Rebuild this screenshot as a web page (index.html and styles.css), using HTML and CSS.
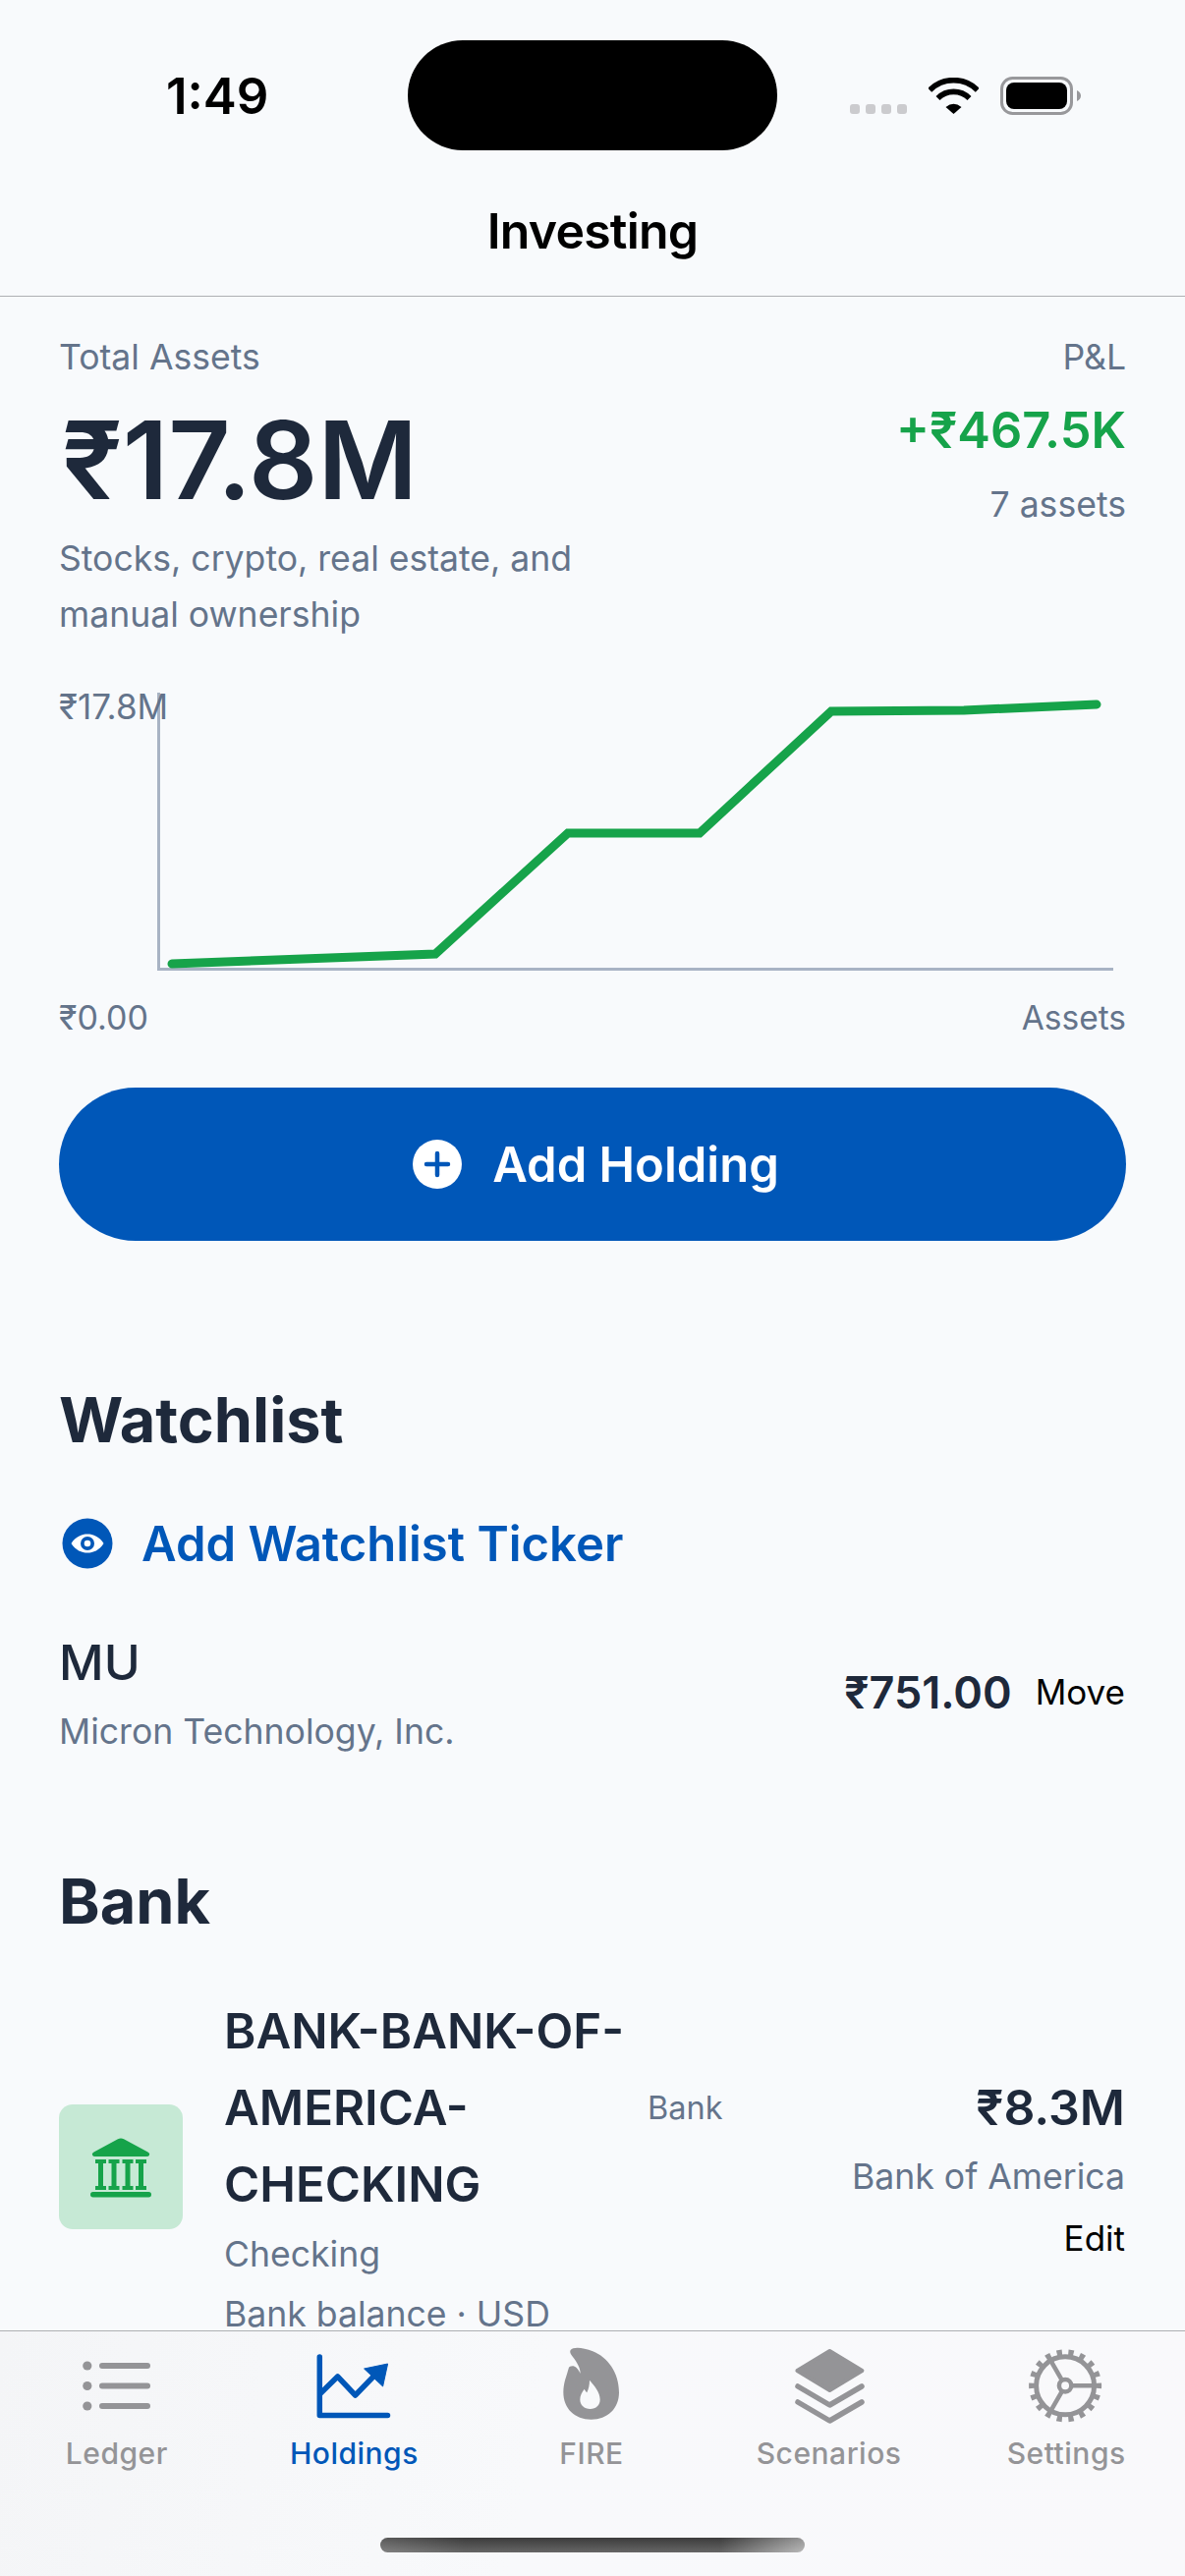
FILE: index.html
```html
<!DOCTYPE html>
<html lang="en">

<head>
    <meta charset="UTF-8">
    <meta name="viewport" content="width=device-width, initial-scale=1.0">
    <title>Investing</title>
    <link rel="stylesheet" href="styles.css">
</head>

<body>
    <div class="app">
        <div class="status-bar">
            <div class="status-time">1:49</div>
            <div class="island"></div>
            <div class="status-icons">
                <div class="signal">
                    <span></span><span></span><span></span><span></span>
                </div>
                <svg class="wifi" width="51" height="37" viewBox="0 0 51 37">
                    <path d="M1.2 12.7A34.3 34.3 0 0 1 49.8 12.7" fill="none" stroke="#000" stroke-width="5.6" />
                    <path d="M9.5 21A22.6 22.6 0 0 1 41.5 21" fill="none" stroke="#000" stroke-width="5.6" />
                    <path d="M25.5 37L17.5 30Q25.5 23.5 33.5 30Z" fill="#000" />
                </svg>
                <svg class="battery" width="82" height="39" viewBox="0 0 82 39">
                    <rect x="1.5" y="1.5" width="71" height="36" rx="11" fill="none" stroke="#98989b" stroke-width="3" />
                    <rect x="6" y="6" width="62" height="27" rx="8" fill="#000" />
                    <path d="M78 14C80.5 15 82 17 82 19.5C82 22 80.5 24 78 25Z" fill="#98989b" />
                </svg>
            </div>
        </div>
        <header class="nav-bar">Investing</header>

        <main class="content">
            <section class="summary">
                <div>
                    <div class="muted summary-label">Total Assets</div>
                    <div class="total">₹17.8M</div>
                    <p class="muted summary-note">Stocks, crypto, real estate, and manual ownership</p>
                </div>
                <div class="summary-right">
                    <div class="muted summary-label">P&amp;L</div>
                    <div class="pnl">+₹467.5K</div>
                    <div class="muted asset-count">7 assets</div>
                </div>
            </section>

            <div class="chart">
                <span class="chart-top muted">₹17.8M</span>
                <svg width="1086" height="300" viewBox="0 0 1086 300">
                    <path d="M101.5 8V289.5H1073" fill="none" stroke="#a8b3c4" stroke-width="3" />
                    <polyline points="115,284 248,279 383,274 518,151 652,151 786,27 921,26 1056,20" fill="none" stroke="#16a34a" stroke-width="9" stroke-linecap="round" />
                </svg>
            </div>
            <div class="chart-foot muted">
                <span>₹0.00</span>
                <span class="chart-x">Assets</span>
            </div>

            <button class="add-holding" type="button">
                <svg width="50" height="50" viewBox="0 0 50 50">
                    <circle cx="25" cy="25" r="25" fill="#fff" />
                    <path d="M25 14V36M14 25H36" stroke="#0057b8" stroke-width="4.5" stroke-linecap="round" />
                </svg>
                Add Holding
            </button>

            <h2 class="section-title watchlist-title">Watchlist</h2>
            <div class="add-ticker">
                <svg width="52" height="52" viewBox="0 0 52 52">
                    <circle cx="26" cy="26" r="25.5" fill="#0057b8" />
                    <path d="M9.5 26C14 19 20 16.5 26 16.5C32 16.5 38 19 42.5 26C38 33 32 35.5 26 35.5C20 35.5 14 33 9.5 26Z" fill="#fff" />
                    <circle cx="26" cy="26" r="7" fill="#0057b8" />
                    <circle cx="26" cy="26" r="3.3" fill="#fff" />
                </svg>
                Add Watchlist Ticker
            </div>
            <div class="watch-row">
                <div>
                    <div class="ticker">MU</div>
                    <div class="muted company">Micron Technology, Inc.</div>
                </div>
                <div class="watch-right">
                    <span class="price">₹751.00</span>
                    <span class="link-text">Move</span>
                </div>
            </div>

            <h2 class="section-title bank-title">Bank</h2>
            <div class="bank-row">
                <div class="bank-icon">
                    <svg width="62" height="62" viewBox="0 0 62 62">
                        <path d="M28 2.2Q31 .6 34 2.2L58.5 15.5Q61 17 60 18.5Q59.5 20 57 20H5Q2.5 20 2 18.5Q1 17 3.5 15.5Z" fill="#16a34a" />
                        <path d="M5 23H16V27H13V50H16V54H5V50H8V27H5ZM18.5 23H29.500V27H26.500V50H29.500V54H18.5V50H21.5V27H18.5ZM32.5 23H43.5V27H40.5V50H43.5V54H32.5V50H35.5V27H32.5ZM46 23H57V27H54V50H57V54H46V50H49V27H46Z" fill="#16a34a" />
                        <rect x="0" y="56" width="62" height="5.5" rx="2.7" fill="#16a34a" />
                    </svg>
                </div>
                <div class="bank-info">
                    <div class="bank-name">BANK-BANK-OF-AMERICA-CHECKING</div>
                    <div class="muted bank-line">Checking</div>
                    <div class="muted bank-line">Bank balance · USD</div>
                </div>
                <div class="bank-side">
                    <span class="muted bank-tag">Bank</span>
                    <div class="bank-values">
                        <div class="bank-amount">₹8.3M</div>
                        <div class="muted bank-inst">Bank of America</div>
                        <div class="link-text bank-edit">Edit</div>
                    </div>
                </div>
            </div>
        </main>

        <nav class="tab-bar">
            <div class="tabs">
                <div class="tab">
                    <svg width="90" height="85" viewBox="0 0 90 85">
                        <g fill="#949497">
                            <circle cx="14.8" cy="23" r="4.6" />
                            <circle cx="14.8" cy="43.5" r="4.6" />
                            <circle cx="14.8" cy="64" r="4.6" />
                            <rect x="27" y="20" width="52" height="6" rx="3" />
                            <rect x="27" y="40.5" width="52" height="6" rx="3" />
                            <rect x="27" y="61" width="52" height="6" rx="3" />
                        </g>
                    </svg>
                    <span>Ledger</span>
                </div>
                <div class="tab active">
                    <svg width="90" height="85" viewBox="0 0 90 85">
                        <path d="M10.3 14V73.5H79.5" fill="none" stroke="#0057b8" stroke-width="5.5" stroke-linecap="round" stroke-linejoin="round" />
                        <path d="M10.3 52L28.6 34L46.6 53L66 33" fill="none" stroke="#0057b8" stroke-width="5.5" stroke-linejoin="round" />
                        <path d="M79.6 21L55.6 26L74.6 44Z" fill="#0057b8" stroke="#0057b8" stroke-width="1" stroke-linejoin="round" />
                    </svg>
                    <span>Holdings</span>
                </div>
                <div class="tab">
                    <svg width="90" height="85" viewBox="-9 15 270 255">
                        <path fill="#949497" fill-rule="evenodd" d="M62 36C70 26 100 28 130 40C175 58 210 105 210 165C210 215 175 248 125 248C75 248 40 215 40 165C40 135 50 115 56 92C58 84 72 82 80 90C86 96 89 102 92 108C92 85 75 65 64 50C60 44 60 40 62 36ZM120 128C135 145 152 165 152 187C152 205 140 216 122 216C104 216 91 205 91 187C91 175 97 165 104 155C107 160 109 163 112 166C117 155 120 142 120 128Z" />
                    </svg>
                    <span>FIRE</span>
                </div>
                <div class="tab">
                    <svg width="90" height="85" viewBox="0 0 90 85">
                        <path d="M45.4 8L78.4 28L45.4 48L12.4 28Z" fill="#949497" stroke="#949497" stroke-width="4" stroke-linejoin="round" />
                        <path d="M13 44L45.4 63L78 44M13 60L45.4 79L78 60" fill="none" stroke="#949497" stroke-width="5.5" stroke-linecap="round" stroke-linejoin="round" />
                    </svg>
                    <span>Scenarios</span>
                </div>
                <div class="tab">
                    <svg width="90" height="85" viewBox="0 0 90 85">
                        <g fill="none" stroke="#949497">
                            <circle cx="44.1" cy="43.3" r="33" stroke-width="8" pathLength="360" stroke-dasharray="9 11" stroke-dashoffset="4.5" />
                            <circle cx="44.1" cy="43.3" r="29.5" stroke-width="5" />
                            <circle cx="44.1" cy="43.3" r="6.2" stroke-width="4.5" />
                            <path d="M50.5 43.3H73M40.9 37.8L29.4 17.8M40.9 48.8L29.4 68.8" stroke-width="4.5" />
                        </g>
                    </svg>
                    <span>Settings</span>
                </div>
            </div>
            <div class="home-indicator"></div>
        </nav>
    </div>
</body>

</html>
```

FILE: styles.css
```css
* {
    box-sizing: border-box;
}

body {
    font-family: Inter, 'Noto Sans', sans-serif;
    background: #f8fafc;
    margin: 0;
    padding: 0;
    color: #1e293b;
}

.app {
    width: 1206px;
    height: 2622px;
    display: flex;
    flex-direction: column;
    overflow: hidden;
}

.muted {
    color: #64748b;
}

/* status bar */
.status-bar {
    display: grid;
    grid-template-columns: 415px 376px 1fr;
    height: 190px;
}

.status-time {
    padding-left: 169px;
    padding-top: 68px;
    font-size: 51px;
    line-height: 60px;
    font-weight: 600;
    color: #000;
}

.island {
    height: 112px;
    margin-top: 41px;
    background: #000;
    border-radius: 56px;
}

.status-icons {
    display: flex;
    align-items: flex-end;
    height: 39px;
    margin-top: 78px;
    padding-left: 74px;
}

.signal {
    display: flex;
    gap: 6px;
    margin-bottom: 1px;
}

.signal span {
    width: 10px;
    height: 10px;
    border-radius: 3px;
    background: #cbcbce;
}

.wifi {
    margin-left: 22px;
    margin-bottom: 1px;
}

.battery {
    margin-left: 22px;
}

.nav-bar {
    height: 112px;
    padding-top: 14px;
    border-bottom: 1px solid #aeb0b3;
    text-align: center;
    font-size: 50px;
    line-height: 62px;
    font-weight: 600;
    letter-spacing: -0.8px;
    color: #000;
}

/* main scroll area */
.content {
    flex: 1;
    min-height: 0;
    overflow: hidden;
    padding: 42px 60px 0;
}

.summary {
    display: flex;
    justify-content: space-between;
}

.summary-label {
    font-size: 35.6px;
    line-height: 40px;
}

.total {
    margin-top: 29px;
    margin-left: 3px;
    font-size: 110px;
    line-height: 110px;
    font-weight: 600;
}

.summary-note {
    width: 590px;
    margin: 17px 0 0;
    font-size: 35.6px;
    line-height: 57px;
}

.summary-right {
    text-align: right;
}

.pnl {
    margin-top: 24px;
    font-size: 50.5px;
    line-height: 60px;
    font-weight: 600;
    color: #16a34a;
}

.asset-count {
    margin-top: 26px;
    font-size: 35.6px;
    line-height: 40px;
}

/* chart */
.chart {
    position: relative;
    height: 300px;
    margin-top: 43px;
}

.chart svg {
    display: block;
}

.chart-top {
    position: absolute;
    left: 0;
    top: 2px;
    font-size: 35px;
    line-height: 40px;
}

.chart-foot {
    display: flex;
    justify-content: space-between;
    margin-top: 19px;
    font-size: 34px;
    line-height: 40px;
}

.chart-x {
    font-size: 33.5px;
}

.add-holding {
    display: flex;
    align-items: center;
    justify-content: center;
    gap: 31px;
    width: 100%;
    height: 156px;
    margin-top: 51px;
    padding: 0 0 0 7px;
    border: none;
    border-radius: 78px;
    background: #0057b8;
    color: #fff;
    font-family: inherit;
    font-size: 49px;
    font-weight: 600;
}

/* sections */
.section-title {
    margin: 0;
    font-size: 63px;
    line-height: 74px;
    font-weight: 700;
}

.watchlist-title {
    margin-top: 145px;
}

.add-ticker {
    display: flex;
    align-items: center;
    gap: 29px;
    margin-top: 63px;
    padding-left: 3px;
    height: 52px;
    color: #0057b8;
    font-size: 49px;
    font-weight: 600;
}

.watch-row {
    display: flex;
    justify-content: space-between;
    align-items: center;
    margin-top: 65px;
}

.ticker {
    font-size: 50px;
    line-height: 60px;
    font-weight: 500;
}

.company {
    margin-top: 16px;
    font-size: 35.6px;
    line-height: 50px;
}

.watch-right {
    display: flex;
    align-items: center;
    gap: 24px;
    margin-bottom: 6px;
    padding-right: 1px;
}

.price {
    font-size: 45px;
    font-weight: 600;
}

.link-text {
    color: #000;
    font-size: 35px;
}

.bank-title {
    margin-top: 110px;
}

.bank-row {
    display: flex;
    align-items: center;
    margin-top: 56px;
}

.bank-icon {
    display: flex;
    align-items: center;
    justify-content: center;
    flex-shrink: 0;
    width: 126px;
    height: 127px;
    margin-bottom: 3px;
    border-radius: 14px;
    background: #c6e9d5;
}

.bank-info {
    width: 431px;
    margin-left: 42px;
    flex-shrink: 0;
}

.bank-name {
    margin-bottom: 2px;
    font-size: 49.2px;
    line-height: 78px;
    font-weight: 600;
}

.bank-line {
    font-size: 35.6px;
    line-height: 61px;
}

.bank-side {
    display: flex;
    flex: 1;
    justify-content: space-between;
    align-items: flex-start;
}

.bank-tag {
    font-size: 32.5px;
    line-height: 72px;
}

.bank-values {
    text-align: right;
    padding-right: 1px;
}

.bank-amount {
    font-size: 50px;
    line-height: 70px;
    font-weight: 600;
}

.bank-inst {
    font-size: 35.6px;
    line-height: 72px;
}

.bank-edit {
    line-height: 52px;
}

/* tab bar */
.tab-bar {
    display: flex;
    flex-direction: column;
    align-items: center;
    height: 250px;
    padding-top: 12px;
    border-top: 1px solid #aeb0b3;
    background: linear-gradient(100deg, #f4f5f7 0%, #f8f9fb 45%, #f9f9fb 100%);
}

.tabs {
    display: grid;
    grid-template-columns: repeat(5, 1fr);
    width: 1208px;
    margin-left: -2px;
}

.tab {
    display: flex;
    flex-direction: column;
    align-items: center;
    color: #949497;
    font-size: 30px;
    line-height: 40px;
    font-weight: 500;
    letter-spacing: 0.5px;
}

.tab span {
    margin-top: 7px;
}

.tab svg {
    display: block;
}

.tab.active {
    color: #0057b8;
}

.home-indicator {
    width: 432px;
    height: 15px;
    margin-top: 66px;
    border-radius: 8px;
    background: linear-gradient(180deg, rgba(0, 0, 0, 0.12), rgba(255, 255, 255, 0.18)), linear-gradient(90deg, #666 0%, #444 20%, #444 80%, #aaa 100%);
}
```
